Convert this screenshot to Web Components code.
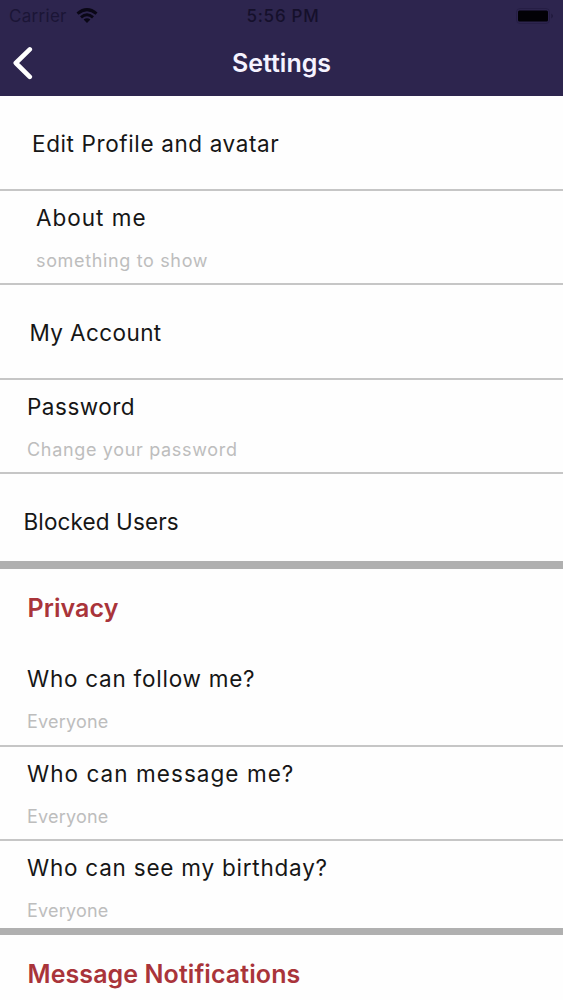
<!DOCTYPE html>
<html lang="en">
<head>
<meta charset="utf-8">
<meta name="viewport" content="width=device-width, initial-scale=1">
<title>Settings</title>
<style>
  body {
    margin: 0;
    background: #fefefe;
    font-family: Inter, "Liberation Sans", sans-serif;
  }
</style>
</head>
<body>
<settings-page></settings-page>

<script>
const statusBar = document.createElement('template');
statusBar.innerHTML = /* html */ `
<style>
:host {
  display: grid;
  grid-template-columns: 1fr auto 1fr;
  align-items: center;
  height: 32px;
  padding: 0 9px;
  color: #15102b;
  font-size: 17px;
}
.carrier {
  display: flex;
  align-items: center;
  gap: 9px;
  color: #1b1536;
}
.carrier span { letter-spacing: 0.3px; }
.time {
  padding-left: 3px;
  font-weight: 500;
  letter-spacing: 0.75px;
}
.battery { justify-self: end; }
svg { display: block; }
</style>
<div class="carrier">
  <span>Carrier</span>
  <svg width="22" height="16" viewBox="0 0 22 16" fill="none" stroke="#0a0716" stroke-width="3">
    <path d="M1.5 5.6 Q11 -2.4 20.5 5.6"/>
    <path d="M5 9.3 Q11 4.3 17 9.3"/>
    <path d="M11 15 L7.6 11.6 Q11 9 14.4 11.6 Z" fill="#0a0716" stroke="none"/>
  </svg>
</div>
<div class="time">5:56 PM</div>
<svg class="battery" width="38" height="16" viewBox="0 0 38 16">
  <rect x="0.5" y="0.5" width="33" height="15" rx="3.5" fill="none" stroke="#261e45"/>
  <rect x="2" y="2.5" width="30" height="11" rx="1.5" fill="#020106"/>
  <path d="M35.5 5.5 Q38 8 35.5 10.5 Z" fill="#1c1536"/>
</svg>
`;

class StatusBar extends HTMLElement {
  constructor() {
    super();
    this.attachShadow({ mode: 'open' });
    this.shadowRoot.appendChild(statusBar.content.cloneNode(true));
  }
}

customElements.define('status-bar', StatusBar);

const appHeader = document.createElement('template');
appHeader.innerHTML = /* html */ `
<style>
:host {
  display: block;
  height: 96px;
  background: #2d254e;
}
nav {
  display: grid;
  grid-template-columns: 1fr auto 1fr;
  align-items: center;
  height: 62px;
  padding: 0 12px;
}
button {
  justify-self: start;
  padding: 0;
  border: 0;
  background: none;
}
svg { display: block; }
h1 {
  margin: 0;
  color: #f5f3ff;
  font-size: 25px;
  font-weight: 600;
  line-height: 30px;
}
</style>
<status-bar></status-bar>
<nav>
  <button type="button" aria-label="Back">
    <svg width="22" height="34" viewBox="0 0 22 34" fill="none" stroke="#fff" stroke-width="4.6" stroke-linecap="round" stroke-linejoin="round">
      <path d="M17.8 3.4 L3.8 17 L17.8 30.8"/>
    </svg>
  </button>
  <h1><slot></slot></h1>
</nav>
`;

class AppHeader extends HTMLElement {
  constructor() {
    super();
    this.attachShadow({ mode: 'open' });
    this.shadowRoot.appendChild(appHeader.content.cloneNode(true));
  }
}

customElements.define('app-header', AppHeader);

const settingsRow = document.createElement('template');
settingsRow.innerHTML = /* html */ `
<style>
:host {
  display: flex;
  flex-direction: column;
  box-sizing: border-box;
  height: 95px;
  padding-top: 12px;
  padding-left: var(--indent, 27px);
  border-bottom: 2px solid #c6c6c6;
  white-space: nowrap;
}
:host([short]) { height: 94px; }
:host([last]) {
  height: 87px;
  border-bottom: 0;
}
:host([single]) { padding-top: 33px; }
.label {
  color: #161616;
  font-size: 22.5px;
  line-height: 30px;
  letter-spacing: var(--label-spacing, 0);
}
.detail {
  margin-top: 16px;
  color: #bdbdbd;
  font-size: 18px;
  line-height: 24px;
  letter-spacing: var(--detail-spacing, 0.2px);
}
</style>
<div class="label"><slot></slot></div>
<div class="detail"><slot name="detail"></slot></div>
`;

class SettingsRow extends HTMLElement {
  constructor() {
    super();
    this.attachShadow({ mode: 'open' });
    this.shadowRoot.appendChild(settingsRow.content.cloneNode(true));
  }
}

customElements.define('settings-row', SettingsRow);

const settingsSection = document.createElement('template');
settingsSection.innerHTML = /* html */ `
<style>
:host {
  display: block;
  border-top: 8px solid #b0b0b0;
}
:host([thin]) { border-top-width: 7px; }
h2 {
  box-sizing: border-box;
  height: 83px;
  margin: 0;
  padding: 24px 0 0 27.5px;
  color: #a9343a;
  font-size: 25px;
  font-weight: 600;
  line-height: 30px;
  letter-spacing: 0.08px;
}
</style>
<h2><slot name="title"></slot></h2>
<slot></slot>
`;

class SettingsSection extends HTMLElement {
  constructor() {
    super();
    this.attachShadow({ mode: 'open' });
    this.shadowRoot.appendChild(settingsSection.content.cloneNode(true));
  }
}

customElements.define('settings-section', SettingsSection);

const settingsPage = document.createElement('template');
settingsPage.innerHTML = /* html */ `
<style>
:host {
  display: block;
  height: 1000px;
  overflow: hidden;
}
.edit { --indent: 32px; --label-spacing: 0.62px; }
.about { --indent: 36px; --label-spacing: 1px; --detail-spacing: 0.65px; }
.account { --indent: 29.5px; --label-spacing: 0.4px; }
.password { --label-spacing: 0.5px; --detail-spacing: 0.67px; }
.blocked { --indent: 23.5px; --label-spacing: 0.12px; }
.follow { --label-spacing: 0.75px; }
.message { --label-spacing: 1.05px; }
.birthday { --label-spacing: 0.77px; }
</style>
<app-header>Settings</app-header>
<settings-row class="edit" single>Edit Profile and avatar</settings-row>
<settings-row class="about" short>About me<span slot="detail">something to show</span></settings-row>
<settings-row class="account" single>My Account</settings-row>
<settings-row class="password" short>Password<span slot="detail">Change your password</span></settings-row>
<settings-row class="blocked" single last>Blocked Users</settings-row>
<settings-section>
  <span slot="title">Privacy</span>
  <settings-row class="follow">Who can follow me?<span slot="detail">Everyone</span></settings-row>
  <settings-row class="message" short>Who can message me?<span slot="detail">Everyone</span></settings-row>
  <settings-row class="birthday" last>Who can see my birthday?<span slot="detail">Everyone</span></settings-row>
</settings-section>
<settings-section thin>
  <span slot="title">Message Notifications</span>
</settings-section>
`;

class SettingsPage extends HTMLElement {
  constructor() {
    super();
    this.attachShadow({ mode: 'open' });
    this.shadowRoot.appendChild(settingsPage.content.cloneNode(true));
  }
}

customElements.define('settings-page', SettingsPage);
</script>
</body>
</html>
